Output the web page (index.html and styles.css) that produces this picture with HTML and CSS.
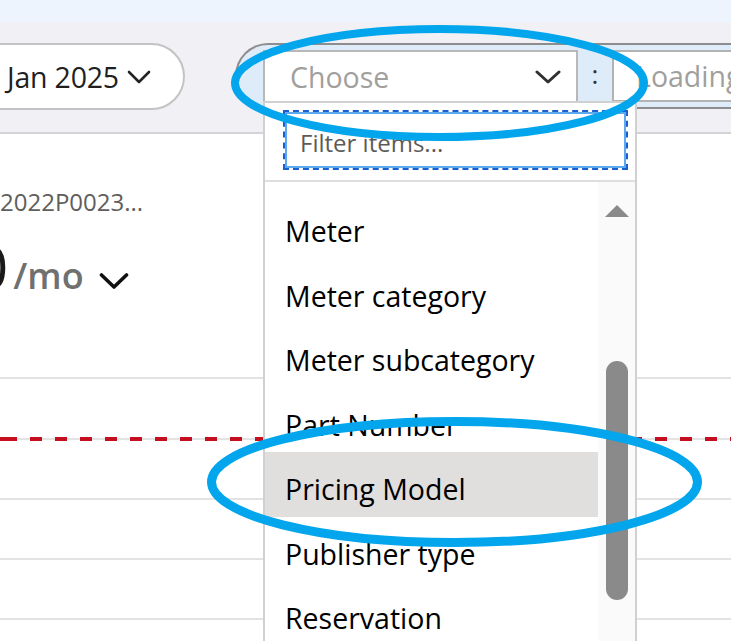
FILE: index.html
```html
<!DOCTYPE html>
<html lang="en">
<head>
<meta charset="utf-8">
<title>Cost analysis</title>
<link rel="stylesheet" href="styles.css">
</head>
<body>
<div class="page">
  <div class="topband"></div>
  <div class="toolbar">
    <div class="date-pill">
      <span class="date-text">Jan 2025</span>
      <svg class="chev" width="24" height="14" viewBox="0 0 24 14"><path d="M2 2 L12 12 L22 2" fill="none" stroke="#242424" stroke-width="2.6" stroke-linecap="round" stroke-linejoin="round"/></svg>
    </div>
    <div class="filter-pill">
      <div class="select">
        <span class="placeholder">Choose</span>
        <svg class="chev" width="26" height="16" viewBox="0 0 26 16"><path d="M2 3 L13 13 L24 3" fill="none" stroke="#323130" stroke-width="3" stroke-linecap="round" stroke-linejoin="round"/></svg>
      </div>
      <div class="colon">:</div>
      <div class="value">Loading</div>
    </div>
  </div>
  <div class="main">
    <div class="scope">2022P0023...</div>
    <div class="cost">
      <span class="amount">0</span>
      <span class="per">/mo</span>
      <svg class="cost-chev" width="30" height="18" viewBox="0 0 30 18"><path d="M2.5 3 L15 15 L27.5 3" fill="none" stroke="#111" stroke-width="3.6" stroke-linecap="round" stroke-linejoin="round"/></svg>
    </div>
    <div class="chart">
      <div class="gridrow"></div>
      <div class="gridrow target"><div class="budget"></div></div>
      <div class="gridrow"></div>
      <div class="gridrow"></div>
      <div class="gridrow"></div>
    </div>
  </div>

  <div class="dropdown">
    <div class="filter-wrap">
      <div class="filter-input">Filter items...</div>
    </div>
    <div class="list">
      <div class="items">
        <div class="item">Meter</div>
        <div class="item">Meter category</div>
        <div class="item">Meter subcategory</div>
        <div class="item">Part Number</div>
        <div class="item selected">Pricing Model</div>
        <div class="item">Publisher type</div>
        <div class="item">Reservation</div>
      </div>
      <div class="track">
        <div class="arrow-up"></div>
        <div class="thumb"></div>
      </div>
    </div>
  </div>

  <svg class="annotations" width="731" height="641" viewBox="0 0 731 641">
    <ellipse cx="439.5" cy="83" rx="204.5" ry="54" fill="none" stroke="#03a6ed" stroke-width="8"/>
    <ellipse cx="454.5" cy="482" rx="243" ry="60.5" fill="none" stroke="#03a6ed" stroke-width="9"/>
  </svg>
</div>
</body>
</html>
```
FILE: styles.css
```css
* { box-sizing: border-box; }
html, body {
  margin: 0;
  padding: 0;
  background: #ffffff;
}
body {
  font-family: "Open Sans", "Noto Sans", "Liberation Sans", sans-serif;
  color: #000;
}
.page {
  position: relative;
  width: 731px;
  height: 641px;
  overflow: hidden;
  background: #fff;
}
.topband {
  height: 22px;
  background: #eef4fd;
}
.toolbar {
  height: 112px;
  background: #f0f0f5;
  border-bottom: 2px solid #d4d4d8;
  display: flex;
  align-items: flex-start;
  padding-top: 21px;
}
.date-pill {
  flex-shrink: 0;
  margin-left: -44px;
  width: 229px;
  height: 67px;
  background: #fff;
  border: 2px solid #c3c3c3;
  border-radius: 34px;
  display: flex;
  align-items: center;
  padding-left: 49px;
  gap: 8px;
}
.date-text {
  font-size: 28.5px;
  color: #1f1f1f;
  letter-spacing: -0.2px;
}
.date-pill .chev { margin-top: 1px; }
.filter-pill {
  flex-shrink: 0;
  margin-left: 50px;
  width: 600px;
  height: 66px;
  background: #deecf9;
  border: 2px solid #8d8d8d;
  border-right: none;
  border-radius: 33px 0 0 33px;
  display: flex;
  align-items: flex-start;
  padding: 5px 0 0 26px;
}
.select {
  width: 315px;
  height: 53px;
  background: #fff;
  border: 2px solid #b8b8b8;
  border-bottom-color: #d0d0d0;
  display: flex;
  align-items: center;
  justify-content: space-between;
  padding: 0 15px 0 25px;
}
.placeholder {
  font-size: 28.5px;
  color: #a19f9d;
}
.select .chev { margin-top: 1px; }
.colon {
  width: 34px;
  height: 52px;
  display: flex;
  align-items: center;
  justify-content: center;
  font-size: 26px;
  color: #323130;
  padding-bottom: 4px;
}
.value {
  flex: 1;
  height: 52px;
  background: #fff;
  border: 2px solid #b3b3b3;
  border-right: none;
  display: flex;
  align-items: center;
  padding-left: 22px;
  font-size: 28.5px;
  color: #a19f9d;
}
.main {
  padding-top: 52px;
}
.scope {
  font-size: 24px;
  line-height: 32px;
  color: #605e5c;
}
.cost {
  display: flex;
  align-items: baseline;
  margin-top: 16px;
  height: 64px;
}
.amount {
  font-size: 60px;
  line-height: 64px;
  color: #1b1a19;
  margin-left: -26px;
}
.per {
  font-size: 36px;
  font-weight: 600;
  color: #707070;
  margin-left: 5px;
}
.cost-chev {
  align-self: flex-start;
  margin-top: 38px;
  margin-left: 15px;
}
.chart {
  margin-top: 79px;
}
.gridrow {
  height: 60px;
  border-top: 2px solid #e3e3e3;
}
.gridrow.target {
  height: 61px;
  border-top: none;
}
.budget {
  height: 4px;
  background:
    repeating-linear-gradient(90deg, #c50f1f 0 12px, transparent 12px 25px) 5px 0 / auto 100%,
    linear-gradient(#fff 0 1px, #e3e3e3 1px 3px, #fff 3px 4px);
}

/* dropdown popup */
.dropdown {
  position: absolute;
  left: 263px;
  top: 101px;
  width: 374px;
  height: 560px;
  background: #fff;
  border: 2px solid #d0d0d0;
}
.filter-wrap {
  padding: 7px 7px 10px 18px;
  border-bottom: 2px solid #dedede;
}
.filter-input {
  height: 60px;
  border: 2px dashed #1a5fd0;
  box-shadow: inset 0 0 0 2px #5ea8ee;
  padding: 17px 0 0 15px;
  font-size: 24px;
  line-height: 28px;
  color: #5d5b58;
}
.list {
  display: flex;
}
.items {
  flex: 1;
  padding-top: 12px;
}
.item {
  height: 64.5px;
  padding: 10px 0 0 20px;
  line-height: 54.5px;
  font-size: 28.5px;
  color: #000;
  white-space: nowrap;
}
.item.selected {
  background: #e1dfdd;
}
.track {
  width: 37px;
  background: #fafafa;
  display: flex;
  flex-direction: column;
  align-items: flex-start;
}
.arrow-up {
  margin-top: 23px;
  margin-left: 7px;
  width: 0;
  height: 0;
  border-left: 12px solid transparent;
  border-right: 12px solid transparent;
  border-bottom: 12px solid #8a8a8a;
}
.thumb {
  margin-top: 144px;
  margin-left: 8px;
  width: 22px;
  height: 239px;
  border-radius: 11px;
  background: #8a8a8a;
}

.annotations {
  position: absolute;
  left: 0;
  top: 0;
  pointer-events: none;
}
```
